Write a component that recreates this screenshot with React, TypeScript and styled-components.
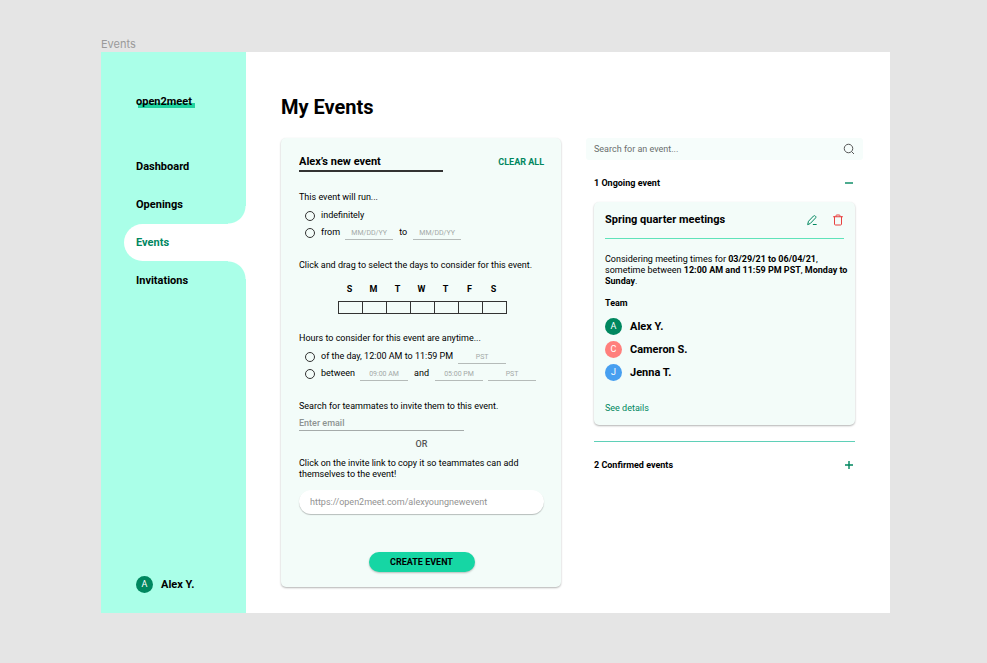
import React, { useState } from "react";
import styled, { createGlobalStyle } from "styled-components";

const green = "#00875f";

const GlobalStyle = createGlobalStyle`
  *, *::before, *::after { box-sizing: border-box; }
  body {
    margin: 0;
    background: #e5e5e5;
    color: #000;
    font-family: Roboto, "Liberation Sans", sans-serif;
    font-size: 9px;
    line-height: 11px;
  }
  h1, h2, h3, p, ul, fieldset { margin: 0; padding: 0; }
  ul { list-style: none; }
  fieldset { border: 0; min-width: 0; }
  legend { padding: 0; }
  input, button { font: inherit; color: inherit; }
  button { cursor: pointer; border: 0; background: none; padding: 0; }
  a { color: inherit; text-decoration: none; }
`;

const Page = styled.div`
  min-height: 100vh;
  padding: 38px 97px 50px 101px;
  display: flex;
  flex-direction: column;
`;

const FrameName = styled.div`
  height: 14px;
  line-height: 13px;
  font-family: Inter, sans-serif;
  font-size: 11px;
  color: #9a9a9a;
`;

const Frame = styled.div`
  flex: 1;
  display: flex;
  background: #fff;
`;

const Sidebar = styled.aside`
  flex: 0 0 145px;
  display: flex;
  flex-direction: column;
  padding: 43px 0 20px;
  background: #aaffe8;
  font-size: 11px;
  font-weight: 700;
`;

const Logo = styled.a`
  align-self: flex-start;
  margin-left: 35px;
  padding-right: 3px;
  line-height: 14px;
  background: linear-gradient(#1fd3a0, #1fd3a0) 2px 8px / 100% 5px no-repeat;
`;

const Nav = styled.nav`
  margin-top: 39px;
  display: grid;
  gap: 1px;
`;

const NavLink = styled.a<{ $active?: boolean }>`
  position: relative;
  height: 37px;
  line-height: 37px;
  margin-left: 23px;
  padding-left: 12px;
  border-radius: 19px 0 0 19px;
  color: ${(p) => (p.$active ? green : "#000")};
  background: ${(p) => (p.$active ? "#fff" : "transparent")};

  &::before,
  &::after {
    content: "";
    display: ${(p) => (p.$active ? "block" : "none")};
    position: absolute;
    right: 0;
    width: 18px;
    height: 18px;
  }
  &::before {
    bottom: 100%;
    background: radial-gradient(circle at 0 0, transparent 17px, #fff 18px);
  }
  &::after {
    top: 100%;
    background: radial-gradient(circle at 0 100%, transparent 17px, #fff 18px);
  }
`;

const Person = styled.div`
  display: flex;
  align-items: center;
  gap: 8px;
  font-size: 11px;
  font-weight: 700;
  line-height: 17px;
`;

const CurrentUser = styled(Person)`
  margin: auto 0 0 35px;
`;

const Avatar = styled.span<{ $color: string }>`
  width: 17px;
  height: 17px;
  border-radius: 50%;
  background: ${(p) => p.$color};
  color: #fff;
  font-size: 9px;
  font-weight: 400;
  text-align: center;
`;

const Main = styled.main`
  flex: 1;
  min-width: 0;
  padding: 43px 27px 25px 35px;
`;

const Title = styled.h1`
  font-size: 20px;
  line-height: 24px;
`;

const Columns = styled.div`
  margin-top: 19px;
  display: grid;
  grid-template-columns: 280fr 277fr;
  gap: 25px;
  align-items: start;
`;

const Card = styled.section`
  background: #f3fcf9;
  border-radius: 5px;
  box-shadow: 0 1px 2px rgba(0, 0, 0, 0.3);
`;

const EventForm = styled.form`
  padding: 14px 17px 15px 18px;
`;

const FormHeader = styled.div`
  display: flex;
  justify-content: space-between;
  align-items: center;
  padding-bottom: 1px;
`;

const NameInput = styled.input`
  width: 144px;
  height: 20px;
  padding: 1px 0 0;
  border: 0;
  border-bottom: 2px solid #333;
  border-radius: 0;
  background: none;
  font-size: 11px;
  font-weight: 700;
`;

const ClearButton = styled.button`
  color: ${green};
  font-weight: 700;
`;

const Group = styled.fieldset`
  margin-top: 19px;
`;

const Prompt = styled.legend`
  display: block;
  margin-bottom: 4px;
`;

const ChoiceRow = styled.div`
  display: flex;
  align-items: center;
  gap: 5px;
  height: 17px;
  padding-left: 6px;
`;

const Choice = styled.label`
  display: flex;
  align-items: center;
  gap: 6px;
`;

const Radio = styled.input`
  appearance: none;
  width: 10px;
  height: 10px;
  margin: 0;
  border: 1px solid #333;
  border-radius: 50%;
  &:checked { background: ${green}; }
`;

const Joiner = styled.span`
  padding: 0 1px;
`;

const SmallInput = styled.input`
  width: 48px;
  height: 15px;
  padding: 2px 0 0;
  border: 0;
  border-bottom: 1px solid #b5bbb9;
  border-radius: 0;
  background: none;
  font-size: 7px;
  text-align: center;
  &::placeholder { color: #a3a9a7; opacity: 1; }
`;

const Days = styled.div`
  display: grid;
  grid-template-columns: repeat(7, 24px);
  justify-content: center;
  margin-top: 9px;
`;

const Day = styled.div`
  display: grid;
  gap: 6px;
  text-align: center;
  font-weight: 700;
`;

const DayCell = styled.button<{ $on: boolean }>`
  height: 13px;
  margin-right: -1px;
  border: 1px solid #333;
  background: ${(p) => (p.$on ? "#16d6a4" : "transparent")};
`;

const EmailInput = styled.input`
  display: block;
  width: 165px;
  height: 16px;
  margin-top: 3px;
  padding: 0;
  border: 0;
  border-bottom: 1px solid #a5abaa;
  border-radius: 0;
  background: none;
  font-weight: 500;
  &::placeholder { color: #8d9391; opacity: 1; }
`;

const Or = styled.p`
  margin: 8px 0;
  text-align: center;
  font-weight: 500;
  color: #555;
`;

const LinkInput = styled.input`
  display: block;
  width: 100%;
  height: 24px;
  margin-top: 10px;
  padding: 0 11px;
  border: 0;
  border-radius: 12px;
  background: #fff;
  color: #929292;
  box-shadow: 0 1px 1px rgba(0, 0, 0, 0.25);
`;

const CreateButton = styled.button`
  display: block;
  width: 106px;
  height: 20px;
  margin: 38px auto 0;
  border-radius: 10px;
  background: #16d6a4;
  box-shadow: 0 1px 2px rgba(0, 0, 0, 0.25);
  font-weight: 700;
`;

const SearchBar = styled.label`
  display: flex;
  align-items: center;
  height: 22px;
  padding: 0 8px;
  border-radius: 3px;
  background: #f6fdfb;
`;

const SearchInput = styled.input`
  flex: 1;
  min-width: 0;
  padding: 0;
  border: 0;
  background: none;
  &::placeholder { color: #6b6f6e; opacity: 1; }
`;

const EventList = styled.div`
  padding: 0 8px;
`;

const GroupHeader = styled.div`
  display: flex;
  align-items: center;
  justify-content: space-between;
  margin: 17px 0 13px;
`;

const GroupTitle = styled.h2`
  font-size: 9px;
  font-weight: 700;
`;

const IconButton = styled.button<{ $danger?: boolean }>`
  display: flex;
  color: ${(p) => (p.$danger ? "#e8403f" : green)};
`;

const EventCard = styled(Card)`
  padding: 11px;
`;

const EventHeader = styled.div`
  display: flex;
  align-items: center;
  height: 26px;
  padding-bottom: 12px;
  border-bottom: 1px solid #5fe3ba;
`;

const EventTitle = styled.h3`
  flex: 1;
  font-size: 11px;
`;

const EventActions = styled.div`
  display: flex;
  gap: 14px;
`;

const Summary = styled.p`
  margin: 15px -8px 11px 0;
`;

const Team = styled.ul`
  display: grid;
  gap: 6px;
  margin: 9px 0 22px;
`;

const TeamTitle = styled.h4`
  margin: 0;
  font-weight: 700;
`;

const DetailsLink = styled.a`
  display: block;
  color: ${green};
`;

const Divider = styled.hr`
  margin: 16px 0 0;
  border: 0;
  border-top: 1px solid #5fd0b8;
`;

const SearchIcon = () => (
  <svg width="12" height="12" viewBox="0 0 24 24" fill="none" stroke="#555" strokeWidth="2">
    <circle cx="11" cy="11" r="8.5" />
    <path d="M17 17l5 5" />
  </svg>
);

const EditIcon = () => (
  <svg width="12" height="12" viewBox="0 0 24 24" fill="none" stroke="currentColor" strokeWidth="2" strokeLinejoin="round" strokeLinecap="round">
    <path d="M3.500 20.500l1.500-6L15 4c1-1 2.500-1 3.500 0l.5.5c1 1 1 2.500 0 3.500L9 18.500z" />
    <path d="M14.500 21h6" />
  </svg>
);

const TrashIcon = () => (
  <svg width="12" height="12" viewBox="0 0 24 24" fill="none" stroke="currentColor" strokeWidth="2" strokeLinejoin="round" strokeLinecap="round">
    <path d="M3 5.500h18M5 5.500V20a2 2 0 0 0 2 2h10a2 2 0 0 0 2-2V5.500M8 5V3.500A1.500 1.500 0 0 1 9.500 2h5A1.500 1.500 0 0 1 16 3.500V5" />
  </svg>
);

const ToggleIcon = ({ open }: { open: boolean }) => (
  <svg width="12" height="12" viewBox="0 0 12 12" fill="none" stroke="currentColor" strokeWidth="1.4">
    <path d={open ? "M2 6h8" : "M2 6h8M6 2v8"} />
  </svg>
);

const days = ["Sunday", "Monday", "Tuesday", "Wednesday", "Thursday", "Friday", "Saturday"];

const team = [
  { name: "Alex Y.", color: green },
  { name: "Cameron S.", color: "#ff7f7c" },
  { name: "Jenna T.", color: "#479ff0" },
];

export default function App() {
  const [name, setName] = useState("Alex’s new event");
  const [picked, setPicked] = useState<string[]>([]);
  const [open, setOpen] = useState(true);
  const toggleDay = (day: string) =>
    setPicked((list) => (list.includes(day) ? list.filter((d) => d !== day) : [...list, day]));

  return (
    <>
      <GlobalStyle />
      <Page>
        <FrameName>Events</FrameName>
        <Frame>
          <Sidebar>
            <Logo href="#">open2meet</Logo>
            <Nav>
              <NavLink href="#dashboard">Dashboard</NavLink>
              <NavLink href="#openings">Openings</NavLink>
              <NavLink href="#events" $active aria-current="page">Events</NavLink>
              <NavLink href="#invitations">Invitations</NavLink>
            </Nav>
            <CurrentUser>
              <Avatar $color={green}>A</Avatar>
              Alex Y.
            </CurrentUser>
          </Sidebar>
          <Main>
            <Title>My Events</Title>
            <Columns>
              <Card>
                <EventForm onSubmit={(e) => e.preventDefault()}>
                  <FormHeader>
                    <NameInput aria-label="Event name" value={name} onChange={(e) => setName(e.target.value)} />
                    <ClearButton type="reset" onClick={() => setPicked([])}>CLEAR ALL</ClearButton>
                  </FormHeader>

                  <Group>
                    <Prompt>This event will run...</Prompt>
                    <ChoiceRow>
                      <Choice><Radio type="radio" name="run" />indefinitely</Choice>
                    </ChoiceRow>
                    <ChoiceRow>
                      <Choice><Radio type="radio" name="run" />from</Choice>
                      <SmallInput aria-label="Start date" placeholder="MM/DD/YY" />
                      <Joiner>to</Joiner>
                      <SmallInput aria-label="End date" placeholder="MM/DD/YY" />
                    </ChoiceRow>
                  </Group>

                  <Group>
                    <Prompt>Click and drag to select the days to consider for this event.</Prompt>
                    <Days>
                      {days.map((day) => (
                        <Day key={day}>
                          <span>{day[0]}</span>
                          <DayCell
                            type="button"
                            aria-label={day}
                            aria-pressed={picked.includes(day)}
                            $on={picked.includes(day)}
                            onClick={() => toggleDay(day)}
                          />
                        </Day>
                      ))}
                    </Days>
                  </Group>

                  <Group>
                    <Prompt>Hours to consider for this event are anytime...</Prompt>
                    <ChoiceRow>
                      <Choice><Radio type="radio" name="hours" />of the day, 12:00 AM to 11:59 PM</Choice>
                      <SmallInput aria-label="Time zone for the whole day" placeholder="PST" />
                    </ChoiceRow>
                    <ChoiceRow>
                      <Choice><Radio type="radio" name="hours" />between</Choice>
                      <SmallInput aria-label="Start time" placeholder="09:00 AM" />
                      <Joiner>and</Joiner>
                      <SmallInput aria-label="End time" placeholder="05:00 PM" />
                      <SmallInput aria-label="Time zone" placeholder="PST" />
                    </ChoiceRow>
                  </Group>

                  <Group>
                    <label>
                      Search for teammates to invite them to this event.
                      <EmailInput type="email" placeholder="Enter email" />
                    </label>
                    <Or>OR</Or>
                    <label>
                      Click on the invite link to copy it so teammates can add themselves to the event!
                      <LinkInput readOnly value="https://open2meet.com/alexyoungnewevent" />
                    </label>
                  </Group>

                  <CreateButton type="submit">CREATE EVENT</CreateButton>
                </EventForm>
              </Card>

              <div>
                <SearchBar>
                  <SearchInput type="search" aria-label="Search for an event" placeholder="Search for an event..." />
                  <SearchIcon />
                </SearchBar>
                <EventList>
                  <GroupHeader>
                    <GroupTitle>1 Ongoing event</GroupTitle>
                    <IconButton type="button" aria-label="Toggle ongoing events" aria-expanded={open} onClick={() => setOpen(!open)}>
                      <ToggleIcon open={open} />
                    </IconButton>
                  </GroupHeader>
                  {open && (
                    <EventCard>
                      <EventHeader>
                        <EventTitle>Spring quarter meetings</EventTitle>
                        <EventActions>
                          <IconButton type="button" aria-label="Edit event"><EditIcon /></IconButton>
                          <IconButton type="button" aria-label="Delete event" $danger><TrashIcon /></IconButton>
                        </EventActions>
                      </EventHeader>
                      <Summary>
                        Considering meeting times for <b>03/29/21 to 06/04/21</b>, sometime between{" "}
                        <b>12:00 AM and 11:59 PM PST</b>, <b>Monday to Sunday</b>.
                      </Summary>
                      <TeamTitle>Team</TeamTitle>
                      <Team>
                        {team.map((member) => (
                          <li key={member.name}>
                            <Person>
                              <Avatar $color={member.color}>{member.name[0]}</Avatar>
                              {member.name}
                            </Person>
                          </li>
                        ))}
                      </Team>
                      <DetailsLink href="#details">See details</DetailsLink>
                    </EventCard>
                  )}
                  <Divider />
                  <GroupHeader>
                    <GroupTitle>2 Confirmed events</GroupTitle>
                    <IconButton type="button" aria-label="Toggle confirmed events" aria-expanded={false}>
                      <ToggleIcon open={false} />
                    </IconButton>
                  </GroupHeader>
                </EventList>
              </div>
            </Columns>
          </Main>
        </Frame>
      </Page>
    </>
  );
}
